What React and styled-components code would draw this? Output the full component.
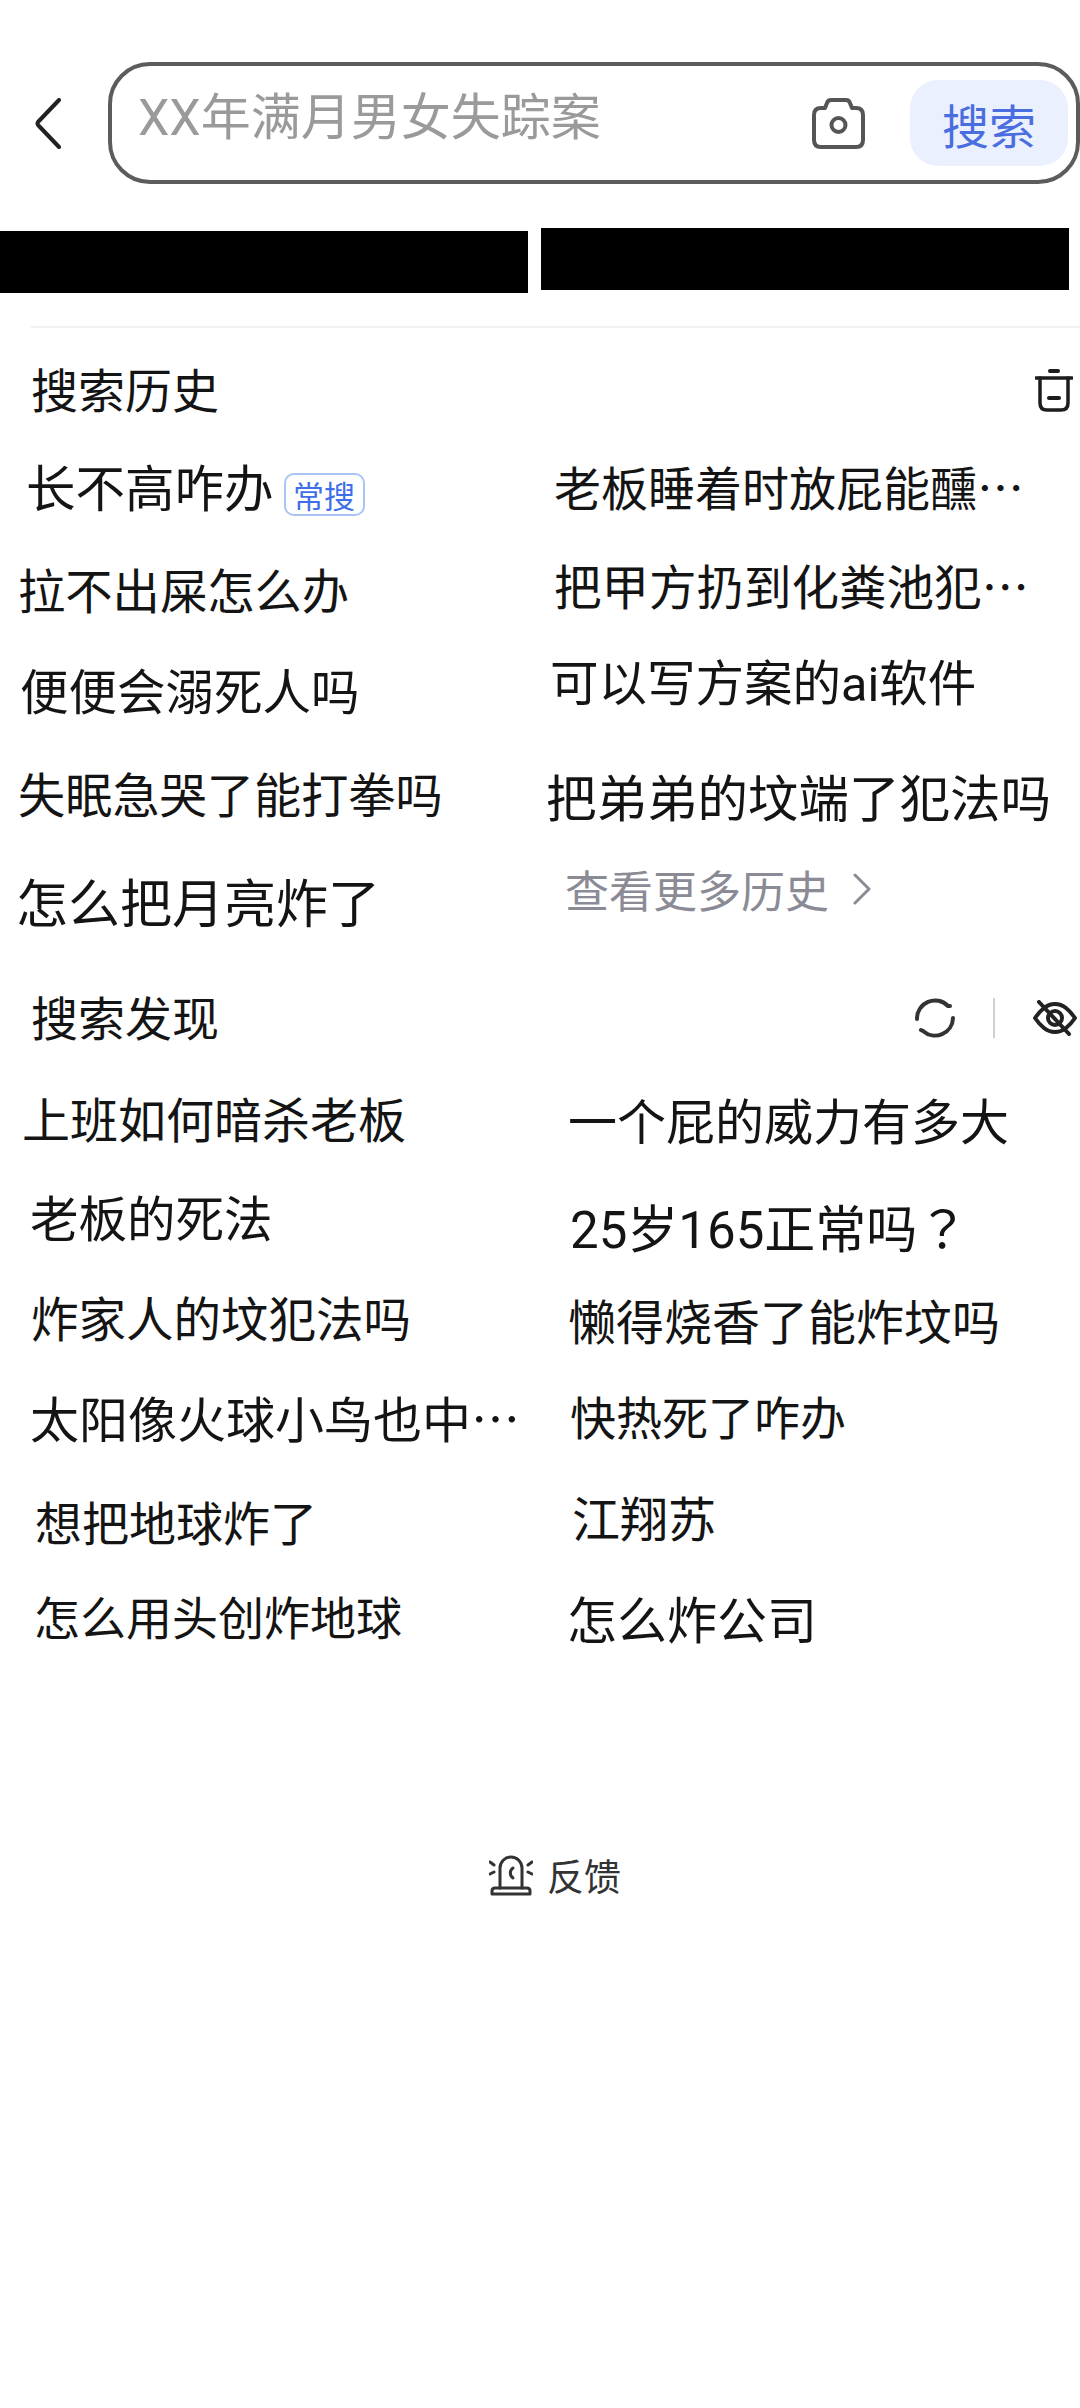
import styled, { createGlobalStyle } from "styled-components";

const GlobalStyle = createGlobalStyle`
  html, body {
    margin: 0;
    background: #fff;
  }
  body {
    font-family: Roboto, "Noto Sans CJK SC", sans-serif;
    overflow-x: hidden;
  }
`;

const Page = styled.div`
  width: 1080px;
  height: 2408px;
  overflow: hidden;
  background: #fff;
  color: #141414;
`;

const Header = styled.div`
  display: flex;
  align-items: center;
  gap: 46px;
  padding: 62px 0 0 34px;
`;

const SearchBar = styled.div`
  flex: 1;
  height: 122px;
  box-sizing: border-box;
  border: 4px solid #5c5c5c;
  border-radius: 42px;
  display: flex;
  align-items: center;
  padding: 0 8px 0 26px;
`;

const Placeholder = styled.div`
  flex: 1;
  font-size: 50px;
  line-height: 60px;
  color: #9a9a9a;
  margin-bottom: 10px;
`;

const SearchButton = styled.div`
  width: 158px;
  height: 86px;
  margin-left: 45px;
  border-radius: 28px;
  background: #ebf0fe;
  color: #4a6ee0;
  font-size: 47px;
  display: flex;
  align-items: center;
  justify-content: center;
`;

const RedactedRow = styled.div`
  display: flex;
  gap: 13px;
  margin-top: 44px;
  height: 65px;
`;

const RedactedBar = styled.div`
  width: 528px;
  height: 62px;
  background: #000;
  margin-top: ${(p) => p.$top}px;
`;

const Divider = styled.div`
  height: 2px;
  margin: 33px 0 0 31px;
  background: #f1f1f1;
`;

const SectionHead = styled.div`
  display: flex;
  align-items: center;
  justify-content: space-between;
  height: 60px;
  padding: 0 ${(p) => p.$right}px 0 31px;
  margin-top: ${(p) => p.$top}px;
`;

const SectionTitle = styled.div`
  font-size: 47px;
  line-height: 60px;
  padding-top: 3px;
`;

const HeadActions = styled.div`
  display: flex;
  align-items: center;
`;

const ActionLine = styled.div`
  width: 2px;
  height: 40px;
  background: #cfcfcf;
  margin: 0 38px;
`;

const Columns = styled.div`
  display: flex;
`;

const Column = styled.div`
  flex: 0 0 540px;
  display: flex;
  flex-direction: column;
`;

const Item = styled.div`
  display: flex;
  align-items: center;
  box-sizing: border-box;
  height: 60px;
  padding-bottom: 6px;
  margin-top: ${(p) => p.$gap}px;
  padding-left: ${(p) => p.$x}px;
  font-size: ${(p) => p.$size}px;
  white-space: nowrap;
`;

const Tail = styled.span`
  font-family: "Noto Sans CJK TC", "Noto Sans CJK SC", sans-serif;
`;

const Badge = styled.span`
  box-sizing: border-box;
  width: 81px;
  height: 43px;
  margin: 19px 0 0 10px;
  border: 2px solid #a9c4f4;
  border-radius: 10px;
  color: #3f6fe8;
  font-size: 31px;
  display: flex;
  align-items: center;
  justify-content: center;
`;

const MoreLink = styled(Item)`
  color: #8b8b95;
  gap: 24px;
`;

const Feedback = styled.div`
  display: flex;
  align-items: center;
  justify-content: center;
  gap: 14px;
  margin-top: 203px;
  padding-left: 30px;
  height: 44px;
  font-size: 37px;
  color: #333;
`;

const history = [
  [
    { text: "长不高咋办", x: 26, gap: 38, size: 49.5, badge: "常搜" },
    { text: "拉不出屎怎么办", x: 18, gap: 43, size: 47.3 },
    { text: "便便会溺死人吗", x: 20, gap: 41, size: 48.5 },
    { text: "失眠急哭了能打拳吗", x: 18, gap: 43, size: 47.2 },
    { text: "怎么把月亮炸了", x: 16, gap: 48, size: 52 },
  ],
  [
    { text: "老板睡着时放屁能醺", x: 14, gap: 38, size: 47, tail: "…" },
    { text: "把甲方扔到化粪池犯", x: 14, gap: 39, size: 47.5, tail: "…" },
    { text: "可以写方案的ai软件", x: 10, gap: 36, size: 48.5 },
    { text: "把弟弟的坟端了犯法吗", x: 6, gap: 55, size: 50.5 },
  ],
];

const discover = [
  [
    { text: "上班如何暗杀老板", x: 22, gap: 42, size: 48 },
    { text: "老板的死法", x: 30, gap: 39, size: 48.5 },
    { text: "炸家人的坟犯法吗", x: 31, gap: 40, size: 47.5 },
    { text: "太阳像火球小鸟也中", x: 30, gap: 40, size: 49, tail: "…" },
    { text: "想把地球炸了", x: 35, gap: 44, size: 47 },
    { text: "怎么用头创炸地球", x: 34, gap: 35, size: 46 },
  ],
  [
    { text: "一个屁的威力有多大", x: 28, gap: 43, size: 49 },
    { text: "25岁165正常吗", x: 30, gap: 48, size: 51, tail: "？" },
    { text: "懒得烧香了能炸坟吗", x: 28, gap: 33, size: 48 },
    { text: "快热死了咋办", x: 30, gap: 36, size: 46 },
    { text: "江翔苏", x: 32, gap: 41, size: 48 },
    { text: "怎么炸公司", x: 27, gap: 41, size: 50 },
  ],
];

function BackIcon() {
  return (
    <svg width="28" height="51" viewBox="0 0 28 51" fill="none" stroke="#222" strokeWidth="4" strokeLinecap="round" strokeLinejoin="round">
      <path d="M25 2 L4 24 Q3 25.500 4 27 L25 49" />
    </svg>
  );
}

function CameraIcon() {
  return (
    <svg width="53" height="51" viewBox="0 0 53 51" fill="none" stroke="#555" strokeWidth="4" strokeLinejoin="round">
      <path d="M9 10 H13 L15 5 Q16 2 19 2 H34 Q37 2 38 5 L40 10 H44 Q51 10 51 17 V42 Q51 49 44 49 H9 Q2 49 2 42 V17 Q2 10 9 10 Z" />
      <circle cx="26.500" cy="27" r="7" />
    </svg>
  );
}

function TrashIcon() {
  return (
    <svg width="38" height="43" viewBox="0 0 38 43" fill="none" stroke="#1c1c1c" strokeWidth="3.500" strokeLinecap="round">
      <path d="M15 2 H23" strokeWidth="4" />
      <path d="M1 9 H37" />
      <path d="M5 9 V34 Q5 41 12 41 H26 Q33 41 33 34 V9" />
      <path d="M14 29 H24" strokeWidth="4" />
    </svg>
  );
}

function RefreshIcon() {
  return (
    <svg width="40" height="40" viewBox="0 0 40 40" fill="none" stroke="#333" strokeWidth="4" strokeLinecap="round">
      <path d="M2 21 A18 18 0 0 1 33 8 L35 8" />
      <path d="M38 20 A18 18 0 0 1 8 33 L6 32" />
    </svg>
  );
}

function EyeOffIcon() {
  return (
    <svg width="44" height="36" viewBox="0 0 44 36" fill="none" stroke="#222" strokeWidth="4" strokeLinecap="round" strokeLinejoin="round" style={{ marginRight: 3 }}>
      <path d="M2 18 Q6 12 11 8 Q16 4 22 4 Q28 4 33 8 Q38 12 42 18 Q38 24 33 28 Q28 32 22 32 Q16 32 11 28 Q6 24 2 18 Z" />
      <circle cx="22" cy="18" r="7" />
      <path d="M6 2 L36 34" />
    </svg>
  );
}

function ChevronIcon() {
  return (
    <svg width="18" height="32" viewBox="0 0 18 32" fill="none" stroke="#8b8b95" strokeWidth="3" strokeLinecap="round" strokeLinejoin="round">
      <path d="M2 2 L16 16 L2 30" />
    </svg>
  );
}

function AlarmIcon() {
  return (
    <svg width="44" height="42" viewBox="0 0 44 42" fill="none" stroke="#333" strokeWidth="3" strokeLinecap="round" strokeLinejoin="round">
      <path d="M11 34 V14 A11 11 0 0 1 33 14 V34" />
      <path d="M6 34 H38 Q41 34 41 37 V40 H3 V37 Q3 34 6 34 Z" />
      <path d="M24 14 A6 6 0 0 0 24 24" />
      <path d="M1 8 L5 11 M1 20 L5 18 M43 8 L39 11 M43 20 L39 18" />
    </svg>
  );
}

function ItemColumn({ items, children }) {
  return (
    <Column>
      {items.map((item) => (
        <Item key={item.text} $x={item.x} $gap={item.gap} $size={item.size}>
          {item.text}
          {item.tail && <Tail>{item.tail}</Tail>}
          {item.badge && <Badge>{item.badge}</Badge>}
        </Item>
      ))}
      {children}
    </Column>
  );
}

function App() {
  return (
    <Page>
      <GlobalStyle />
      <Header>
        <BackIcon />
        <SearchBar>
          <Placeholder>XX年满月男女失踪案</Placeholder>
          <CameraIcon />
          <SearchButton>搜索</SearchButton>
        </SearchBar>
      </Header>

      <RedactedRow>
        <RedactedBar $top={3} />
        <RedactedBar $top={0} />
      </RedactedRow>
      <Divider />

      <SectionHead $top={32} $right={7}>
        <SectionTitle>搜索历史</SectionTitle>
        <TrashIcon />
      </SectionHead>
      <Columns>
        <ItemColumn items={history[0]} />
        <ItemColumn items={history[1]}>
          <MoreLink $x={25} $gap={34} $size={44}>
            查看更多历史
            <ChevronIcon />
          </MoreLink>
        </ItemColumn>
      </Columns>

      <SectionHead $top={55} $right={0}>
        <SectionTitle>搜索发现</SectionTitle>
        <HeadActions>
          <RefreshIcon />
          <ActionLine />
          <EyeOffIcon />
        </HeadActions>
      </SectionHead>
      <Columns>
        <ItemColumn items={discover[0]} />
        <ItemColumn items={discover[1]} />
      </Columns>

      <Feedback>
        <AlarmIcon />
        反馈
      </Feedback>
    </Page>
  );
}

export default App;
